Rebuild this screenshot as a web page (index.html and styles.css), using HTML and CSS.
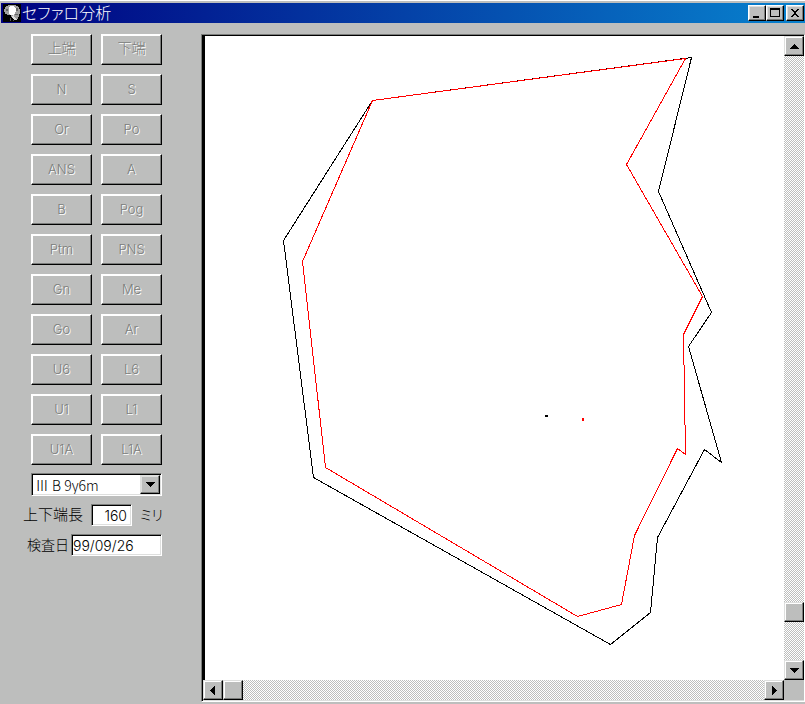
FILE: index.html
```html
<!DOCTYPE html>
<html lang="ja">
<head>
<meta charset="utf-8">
<title>セファロ分析</title>
<link rel="stylesheet" href="styles.css">
</head>
<body>
<div class="window">
  <header class="titlebar">
    <svg class="app-icon" viewBox="0 0 18 18" aria-hidden="true" shape-rendering="crispEdges">
      <rect width="18" height="18" fill="#000"/>
      <path d="M1 5h1V3h1V2h2V1h8v1h2v1h1v2h1v5h-1v3h-1v2h-1v1h-2v-1h-2v-2H8v-2H4v-1H2V8H1z" fill="#a0a0a0"/>
      <path d="M6 3h1V2h4v1h1v1h1v4h-1v2h-1v1H7v-1H6z" fill="#fff"/>
      <path d="M10 11h1v2h1v1h1v1h1v1h-3v-1h-1v-1H9v-2h1z" fill="#ddd"/>
      <path d="M3 5h2v2H3zM13 4h2v3h-2zM12 10h3v1h-3z" fill="#666"/>
      <path d="M7 14h1v3H7zM10 16h1v1h-1z" fill="#555"/>
    </svg>
    <h1>セファロ分析</h1>
    <div class="caption-buttons">
      <button type="button" class="cap" aria-label="最小化"><svg viewBox="0 0 12 10" shape-rendering="crispEdges"><path d="M2 8h6v2H2z"/></svg></button>
      <button type="button" class="cap" aria-label="最大化"><svg viewBox="0 0 12 10" shape-rendering="crispEdges"><path fill-rule="evenodd" d="M1 0h10v9H1zM2 2v6h8V2z"/></svg></button>
      <button type="button" class="cap close" aria-label="閉じる"><svg viewBox="0 0 12 10" shape-rendering="crispEdges"><path d="M2 1h2v1h1v1h2V2h1V1h2v1H9v1H8v1H7v2h1v1h1v1h1v1H8V8H7V7H5v1H4v1H2V8h1V7h1V6h1V4H4V3H3V2H2z"/></svg></button>
    </div>
  </header>
  <main class="content">
    <form class="panel">
      <div class="points">
        <button type="button" disabled>上端</button><button type="button" disabled>下端</button>
        <button type="button" disabled>N</button><button type="button" disabled>S</button>
        <button type="button" disabled>Or</button><button type="button" disabled>Po</button>
        <button type="button" disabled>ANS</button><button type="button" disabled>A</button>
        <button type="button" disabled>B</button><button type="button" disabled>Pog</button>
        <button type="button" disabled>Ptm</button><button type="button" disabled>PNS</button>
        <button type="button" disabled>Gn</button><button type="button" disabled>Me</button>
        <button type="button" disabled>Go</button><button type="button" disabled>Ar</button>
        <button type="button" disabled>U6</button><button type="button" disabled>L6</button>
        <button type="button" disabled>U1</button><button type="button" disabled>L1</button>
        <button type="button" disabled>U1A</button><button type="button" disabled>L1A</button>
      </div>
      <div class="combo">
        <select aria-label="標準"><option>Ⅲ B 9y6m</option></select>
        <span class="drop" aria-hidden="true"><svg viewBox="0 0 9 5" shape-rendering="crispEdges"><path d="M0 0h9v1H8v1H7v1H6v1H5v1H4V4H3V3H2V2H1V1H0z"/></svg></span>
      </div>
      <div class="field length">
        <label for="length">上下端長</label>
        <input id="length" type="text" value="160">
        <span>ミリ</span>
      </div>
      <div class="field date">
        <label for="date">検査日</label>
        <input id="date" type="text" value="99/09/26">
      </div>
    </form>
    <section class="viewer" aria-label="プロフィログラム">
      <div class="canvas">
        <svg viewBox="205 36 579 643" preserveAspectRatio="xMinYMin meet" shape-rendering="crispEdges" fill="none">
          <path stroke="#000" d="M372.5 100.5L691.5 57.5L658.5 191.5L711.5 312.5L688.5 346.5L721.5 462.5L704.5 449.5L657.5 537.5L650.5 612.5L610.5 644.5L313.5 477.5L283.5 240.5Z"/>
          <path stroke="#f00" d="M372.5 100.5L685.5 58.5L626.5 164.5L702.5 296.5L683.5 334.5L685.5 454.5L677.5 448.5L634.5 535.5L621.5 604.5L577.5 616.5L325.5 467.5L302.5 261.5Z"/>
          <path fill="#000" d="M545 415h3v2h-3z"/>
          <path fill="#f00" d="M582 418h2v3h-2z"/>
        </svg>
      </div>
      <div class="scroll vertical">
        <button type="button" aria-label="上へ"><svg viewBox="0 0 9 9" shape-rendering="crispEdges"><path d="M4 2h1v1h1v1h1v1h1v1h1v1H0V6h1V5h1V4h1V3h1z"/></svg></button>
        <div class="track"><span class="thumb"></span></div>
        <button type="button" aria-label="下へ"><svg viewBox="0 0 9 9" shape-rendering="crispEdges"><path d="M0 2h9v1H8v1H7v1H6v1H5v1H4V6H3V5H2V4H1V3H0z"/></svg></button>
      </div>
      <div class="scroll horizontal">
        <button type="button" aria-label="左へ"><svg viewBox="0 0 9 9" shape-rendering="crispEdges"><path d="M6 0v9H5V8H4V7H3V6H2V5H1V4h1V3h1V2h1V1h1V0z"/></svg></button>
        <div class="track"><span class="thumb"></span></div>
        <button type="button" aria-label="右へ"><svg viewBox="0 0 9 9" shape-rendering="crispEdges"><path d="M2 0v9h1V8h1V7h1V6h1V5h1V4H6V3H5V2H4V1H3V0z"/></svg></button>
      </div>
    </section>
  </main>
</div>
</body>
</html>
```
FILE: styles.css
```css
* { box-sizing: border-box; }

:root {
  --face: #bdbebd;
  --shadow: #7b7d7b;
  --light: #fff;
}

body {
  margin: 0;
  background: var(--face);
  color: #000;
  font: 300 13px/20px Inter, "Noto Sans CJK JP", sans-serif;
}

.window {
  display: flex;
  flex-direction: column;
  min-height: 100vh;
  padding: 3px 0 0 1px;
  border-bottom: 2px solid var(--face);
  box-shadow: inset 0 1px #fff;
}

.titlebar {
  display: flex;
  align-items: center;
  height: 20px;
  padding: 0 1px 0 2px;
  background: linear-gradient(90deg, #000080, #0882ce);
}

.app-icon { width: 18px; height: 18px; }

h1 {
  flex: 1;
  margin: 0 0 0 1px;
  color: #fff;
  font-size: 16px;
  font-weight: 300;
  line-height: 20px;
  font-feature-settings: "palt";
}

.caption-buttons { display: flex; }

button,
.thumb,
.drop {
  margin: 0;
  padding: 0;
  border: 1px solid;
  border-color: var(--light) #000 #000 var(--light);
  background: var(--face);
  box-shadow: inset -1px -1px var(--shadow), inset 1px 1px #dedfde;
  color: #000;
  font: inherit;
}

button svg { display: block; margin: auto; }

.cap { width: 18px; height: 16px; }
.cap svg { width: 12px; height: 10px; }
.close { margin-left: 2px; }

.content { display: flex; flex: 1; }

.panel {
  flex: 0 0 200px;
  padding: 11px 0 0 30px;
}

.points {
  display: grid;
  grid-template-columns: 61px 61px;
  grid-auto-rows: 31px;
  gap: 9px;
}

.points button {
  padding-bottom: 2px;
  box-shadow: inset -1px -1px var(--shadow), inset 1px 1px var(--light);
  color: var(--shadow);
  text-shadow: 1px 1px var(--light);
}

.points button:nth-child(-n+2) { font-size: 14px; padding-bottom: 4px; }

select,
input {
  margin: 0;
  padding: 0;
  border: 0;
  border-radius: 0;
  outline: 0;
  background: #fff;
  color: #000;
  font: inherit;
}

.combo,
.field input {
  border: 1px solid;
  border-color: var(--shadow) var(--light) var(--light) var(--shadow);
  background: #fff;
  box-shadow: inset 1px 1px #000, inset -1px -1px #dedfde;
}

.combo {
  display: flex;
  width: 131px;
  height: 23px;
  margin-top: 8px;
  padding: 1px;
}

.combo select {
  flex: 1;
  min-width: 0;
  padding-left: 2px;
  appearance: none;
  background: transparent;
  font-family: "Noto Sans CJK JP", sans-serif;
  font-size: 14px;
}

.drop {
  display: grid;
  place-items: center;
  width: 20px;
  border-color: #dedfde #000 #000 #dedfde;
  pointer-events: none;
}

.drop svg { width: 9px; height: 5px; }

.field { display: flex; align-items: center; font-size: 14px; }

.length { height: 22px; margin: 8px 0 0 -8px; }
.length label { width: 68px; font-size: 15px; }
.length input { width: 41px; height: 22px; padding-right: 4px; text-align: right; }
.length span { margin-left: 8px; font-feature-settings: "palt"; }

.date { height: 22px; margin: 8px 0 0 -4px; }
.date label { width: 44px; }
.date input { width: 91px; height: 22px; padding-left: 1px; }

.viewer {
  display: grid;
  flex: 1;
  grid-template: minmax(0, 1fr) 20px / minmax(0, 1fr) 20px;
  min-width: 0;
  margin-top: 11px;
  padding: 1px 0 1px 1px;
  border: 1px solid;
  border-color: var(--shadow) var(--light) var(--light) var(--shadow);
  box-shadow: inset 1px 1px #000, inset 0 -1px #dedfde;
}

.canvas { border-left: 2px solid #000; background: #fff; overflow: hidden; }
.canvas svg { display: block; width: 100%; height: 100%; }

.scroll {
  display: flex;
  background: repeating-conic-gradient(#bdbebd 0 25%, #fff 0 50%) 0 0 / 2px 2px;
}

.vertical { flex-direction: column; }

.horizontal { grid-row: 2; }

.scroll button,
.thumb {
  flex: none;
  width: 20px;
  height: 20px;
  border-color: #dedfde #000 #000 #dedfde;
  box-shadow: inset -1px -1px var(--shadow), inset 1px 1px var(--light);
}

.scroll button svg { width: 9px; height: 9px; }

.track { display: flex; flex: 1; }
.vertical .track { flex-direction: column; justify-content: flex-end; padding-bottom: 38px; }
```
